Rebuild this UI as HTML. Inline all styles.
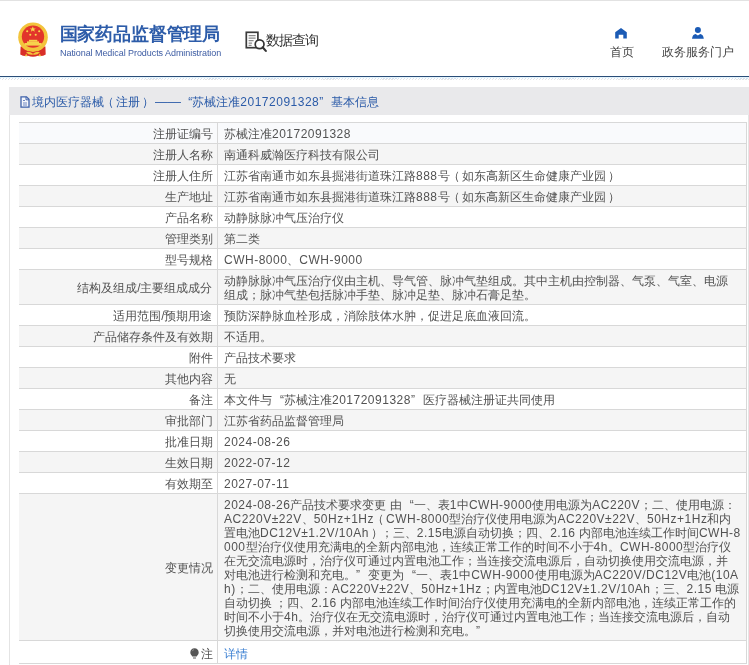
<!DOCTYPE html>
<html><head><meta charset="utf-8">
<style>
*{margin:0;padding:0;box-sizing:border-box}
html,body{width:749px;height:665px;overflow:hidden;background:#fff}
body{font-family:"Liberation Sans",sans-serif;color:#333;font-size:12px;position:relative;font-weight:500}
.hdr{will-change:transform;position:absolute;left:0;top:0;width:749px;height:76px;background:#fff}
.emb{position:absolute;left:12px;top:18px;width:42px;height:42px}
.t1{position:absolute;left:59.5px;top:22.5px;font-size:18px;font-weight:bold;color:#2d5ca9;letter-spacing:-0.15px;white-space:nowrap;line-height:22px}
.t2{position:absolute;left:60px;top:46px;font-size:9px;letter-spacing:-0.06px;color:#3d5ca3;transform:scaleY(1.07);transform-origin:0 0;white-space:nowrap;line-height:12px}
.sj{position:absolute;left:245px;top:31px;width:22px;height:22px}
.sjt{position:absolute;left:266px;top:30.5px;font-size:14px;letter-spacing:-1px;color:#333;line-height:18px;white-space:nowrap}
.navt{position:absolute;white-space:nowrap;font-size:12px;line-height:16px;color:#444}
.line{position:absolute;left:0;top:76px;width:749px;height:1px;background:#2a4d78}
.hatch{position:absolute;left:0;top:77px;width:749px;height:1px;background:#e3f3fa}
.h2{position:absolute;left:0;top:78px;width:749px;height:1px;background:repeating-linear-gradient(90deg,#d3e0f1 0 1.2px,#fff 1.2px 2.95px)}
.h3{position:absolute;left:-1px;top:79px;width:750px;height:1px;background:repeating-linear-gradient(90deg,#e4e4e4 0 1.2px,#fff 1.2px 2.95px)}
.box{position:absolute;left:9px;top:87px;width:740px;height:600px;border-left:1px solid #e4e4e4;border-right:1px solid #e4e4e4}
.bar{position:absolute;left:9px;top:87px;width:740px;height:28px;background:#e9e9eb}
.bart{will-change:transform;position:absolute;left:19px;top:93.5px;font-size:12px;color:#2b5ba8;line-height:16px;white-space:nowrap}
table{will-change:transform;position:absolute;left:19px;top:122px;width:728px;border-collapse:collapse;table-layout:fixed}
td{border-top:1px solid #d8d8d8;border-bottom:1px solid #d8d8d8;line-height:14px;padding:4px 6px 2px 6.5px;vertical-align:middle;white-space:nowrap;color:#525252}
td.l{width:198px;text-align:right;padding-right:4px;border-right:1px solid #d8d8d8}
tr:nth-child(even) td{background:#f5f5f5}
tr:first-child td{background:#f9fafc}
td+td{border-right:1px solid #d8d8d8}
tr.last td{height:23px;padding-top:5px;padding-bottom:2px}
.bulb{display:inline-block;vertical-align:-1px;margin-right:2px}
a{color:#3a7fd2;text-decoration:none}
.n{letter-spacing:0.5px}
.ql{margin-left:8px}
.pl{position:relative;left:-2px}
.pr{position:relative;left:2px}
.dd{display:inline-block;transform:scaleX(1.08);transform-origin:0 0;margin-right:2px}
.qr{margin-right:8px}
</style></head><body>
<div class="hdr">
 <svg class="emb" viewBox="0 0 42 42">
  <path d="M8.6 28.5 L8.3 36.5 Q12 38.8 16 37.8 Q21 39.5 26 37.8 Q30 38.8 33.7 36.5 L33.4 28.5Z" fill="#d92f28"/>
  <circle cx="21" cy="19.2" r="14.8" fill="#f3c43c"/>
  <circle cx="21" cy="18.6" r="11.2" fill="#e2352b"/>
  <rect x="17" y="21.8" width="8.3" height="1.8" fill="#f7d24c"/>
  <rect x="15" y="23.4" width="12" height="1.7" fill="#f7d24c"/>
  <rect x="12.6" y="25" width="17" height="2.6" fill="#f7d24c"/>
  <path d="M10.5 31 Q21 37 31.5 31 L32.5 33 Q21 39.5 9.5 33Z" fill="#d92f28"/>
  <path d="M14 34.2 Q17.5 33 21 35.8 Q24.5 33 28 34.2 Q25 37.5 21 36.6 Q17 37.5 14 34.2Z" fill="#f3c43c"/>
  <path d="M12.8 38.2 L14.2 35.4 L15.6 38.2Z M26.4 38.2 L27.8 35.4 L29.2 38.2Z" fill="#f3c43c"/>
  <path d="M20.8 8.4l.9 2h2.1l-1.7 1.3.7 2.1-2-1.3-2 1.3.7-2.1-1.7-1.3h2.1z" fill="#f9d84a"/>
  <circle cx="15.2" cy="13.3" r="1.05" fill="#f9d84a"/><circle cx="27.2" cy="13.3" r="1.05" fill="#f9d84a"/>
  <circle cx="18.3" cy="16.7" r="1.05" fill="#f9d84a"/><circle cx="23.7" cy="16.7" r="1.05" fill="#f9d84a"/>
 </svg>
 <div class="t1">国家药品监督管理局</div>
 <div class="t2">National Medical Products Administration</div>
 <svg class="sj" viewBox="0 0 22 22"><rect x="1.3" y="1.3" width="11.6" height="15.4" fill="#fff" stroke="#3a3a3a" stroke-width="1.7"/><path d="M3.6 4.6h7M3.6 7.1h7M3.6 9.6h5M3.6 12.1h3.5M3.6 14.4h3" stroke="#8a8a8a" stroke-width="1.1"/><circle cx="14.6" cy="13.2" r="4.4" fill="#fff" stroke="#333" stroke-width="1.7"/><path d="M17.6 16.3l3.2 3.6" stroke="#333" stroke-width="2.1" stroke-linecap="round"/></svg>
 <div class="sjt">数据查询</div>
 <svg style="position:absolute;left:615px;top:28px" width="12" height="11" viewBox="0 0 12 11"><path d="M6 0.1L11.8 4.2V10.6H8.3V6.8H3.7V10.6H0.2V4.2Z" fill="#1b5bb5"/></svg>
 <div class="navt" style="left:610px;top:44px">首页</div>
 <svg style="position:absolute;left:692px;top:27px" width="12" height="12" viewBox="0 0 12 12"><circle cx="5.9" cy="3" r="3" fill="#1b5bb5"/><path d="M0 11.8Q0.6 7.3 3.6 7L5.9 8.4L8.2 7Q11.2 7.3 11.8 11.8z" fill="#1b5bb5"/></svg>
 <div class="navt" style="left:661.5px;top:44px">政务服务门户</div>
</div>
<div style="position:absolute;left:0;top:0;width:749px;height:1px;background:#e2e2e2"></div><div class="line"></div><div class="hatch"></div><div class="h2"></div><div class="h3"></div>
<div class="box"></div>
<div class="bar"></div>
<div class="bart"><svg width="10" height="12" viewBox="0 0 10 12" style="vertical-align:-2px;margin-right:2px;margin-left:1px"><path d="M1 .8h5.5L9 3.3V11.2H1z" fill="#f4f6fb" stroke="#3f62aa" stroke-width="1.3"/><path d="M6 .8v3h3" fill="none" stroke="#3f62aa" stroke-width="1"/><path d="M3 4.5h2M3 7h4M3 9h4" stroke="#6f86c0" stroke-width="1"/></svg>境内医疗器械<span class="pl">（</span>注册<span class="pr">）</span> <span class="dd">——</span><span class="ql" style="margin-left:7px">“</span>苏械注准<span class="n">20172091328</span><span class="qr">”</span>基本信息</div>
<table>
<tr><td class="l">注册证编号</td><td>苏械注准<span class="n">20172091328</span></td></tr>
<tr><td class="l">注册人名称</td><td>南通科威瀚医疗科技有限公司</td></tr>
<tr><td class="l">注册人住所</td><td>江苏省南通市如东县掘港街道珠江路<span class="n">888</span>号<span class="pl">（</span>如东高新区生命健康产业园<span class="pr">）</span></td></tr>
<tr><td class="l">生产地址</td><td>江苏省南通市如东县掘港街道珠江路<span class="n">888</span>号<span class="pl">（</span>如东高新区生命健康产业园<span class="pr">）</span></td></tr>
<tr><td class="l">产品名称</td><td>动静脉脉冲气压治疗仪</td></tr>
<tr><td class="l">管理类别</td><td>第二类</td></tr>
<tr><td class="l">型号规格</td><td><span class="n">CWH-8000</span>、<span class="n">CWH-9000</span></td></tr>
<tr><td class="l">结构及组成/主要组成成分</td><td>动静脉脉冲气压治疗仪由主机、导气管、脉冲气垫组成。其中主机由控制器、气泵、气室、电源<br>组成；脉冲气垫包括脉冲手垫、脉冲足垫、脉冲石膏足垫。</td></tr>
<tr><td class="l">适用范围/预期用途</td><td>预防深静脉血栓形成，消除肢体水肿，促进足底血液回流。</td></tr>
<tr><td class="l">产品储存条件及有效期</td><td>不适用。</td></tr>
<tr><td class="l">附件</td><td>产品技术要求</td></tr>
<tr><td class="l">其他内容</td><td>无</td></tr>
<tr><td class="l">备注</td><td>本文件与<span class="ql">“</span>苏械注准<span class="n">20172091328</span><span class="qr">”</span>医疗器械注册证共同使用</td></tr>
<tr><td class="l">审批部门</td><td>江苏省药品监督管理局</td></tr>
<tr><td class="l">批准日期</td><td><span class="n">2024-08-26</span></td></tr>
<tr><td class="l">生效日期</td><td><span class="n">2022-07-12</span></td></tr>
<tr><td class="l">有效期至</td><td><span class="n">2027-07-11</span></td></tr>
<tr><td class="l">变更情况</td><td><span class="n">2024-08-26</span>产品技术要求变更 由<span class="ql">“</span>一、表<span class="n">1</span>中<span class="n">CWH-9000</span>使用电源为<span class="n">AC220V</span>；二、使用电源：<br><span class="n">AC220V±22V</span>、<span class="n">50Hz+1Hz</span><span class="pl">（</span><span class="n">CWH-8000</span>型治疗仪使用电源为<span class="n">AC220V±22V</span>、<span class="n">50Hz+1Hz</span>和内<br>置电池<span class="n">DC12V±1.2V/10Ah</span><span class="pr">）</span>；三、<span class="n">2.15</span>电源自动切换；四、<span class="n">2.16</span> 内部电池连续工作时间<span class="n">CWH-8</span><br><span class="n">000</span>型治疗仪使用充满电的全新内部电池，连续正常工作的时间不小于<span class="n">4h</span>。<span class="n">CWH-8000</span>型治疗仪<br>在无交流电源时，治疗仪可通过内置电池工作；当连接交流电源后，自动切换使用交流电源，并<br>对电池进行检测和充电。<span class="qr">”</span>变更为<span class="ql">“</span>一、表<span class="n">1</span>中<span class="n">CWH-9000</span>使用电源为<span class="n">AC220V/DC12V</span>电池<span class="n">(10A</span><br><span class="n">h)</span>；二、使用电源：<span class="n">AC220V±22V</span>、<span class="n">50Hz+1Hz</span>；内置电池<span class="n">DC12V±1.2V/10Ah</span>；三、<span class="n">2.15</span> 电源<br>自动切换 ；四、<span class="n">2.16</span> 内部电池连续工作时间治疗仪使用充满电的全新内部电池，连续正常工作的<br>时间不小于<span class="n">4h</span>。治疗仪在无交流电源时，治疗仪可通过内置电池工作；当连接交流电源后，自动<br>切换使用交流电源，并对电池进行检测和充电。<span class="qr">”</span></td></tr>
<tr class="last"><td class="l"><svg class="bulb" width="9" height="11" viewBox="0 0 9 11"><path d="M4.5 0.3C2 0.3 0.3 2.2 0.3 4.4C0.3 6.2 1.6 7.1 2.3 8.4H6.7C7.4 7.1 8.7 6.2 8.7 4.4C8.7 2.2 7 0.3 4.5 0.3Z" fill="#555"/><path d="M3 9.4H6V10.6H3Z" fill="#777"/><path d="M2.2 3.2Q2.7 1.8 4 1.6" stroke="#999" stroke-width="0.8" fill="none"/></svg>注</td><td><a>详情</a></td></tr>
</table>
</body></html>
